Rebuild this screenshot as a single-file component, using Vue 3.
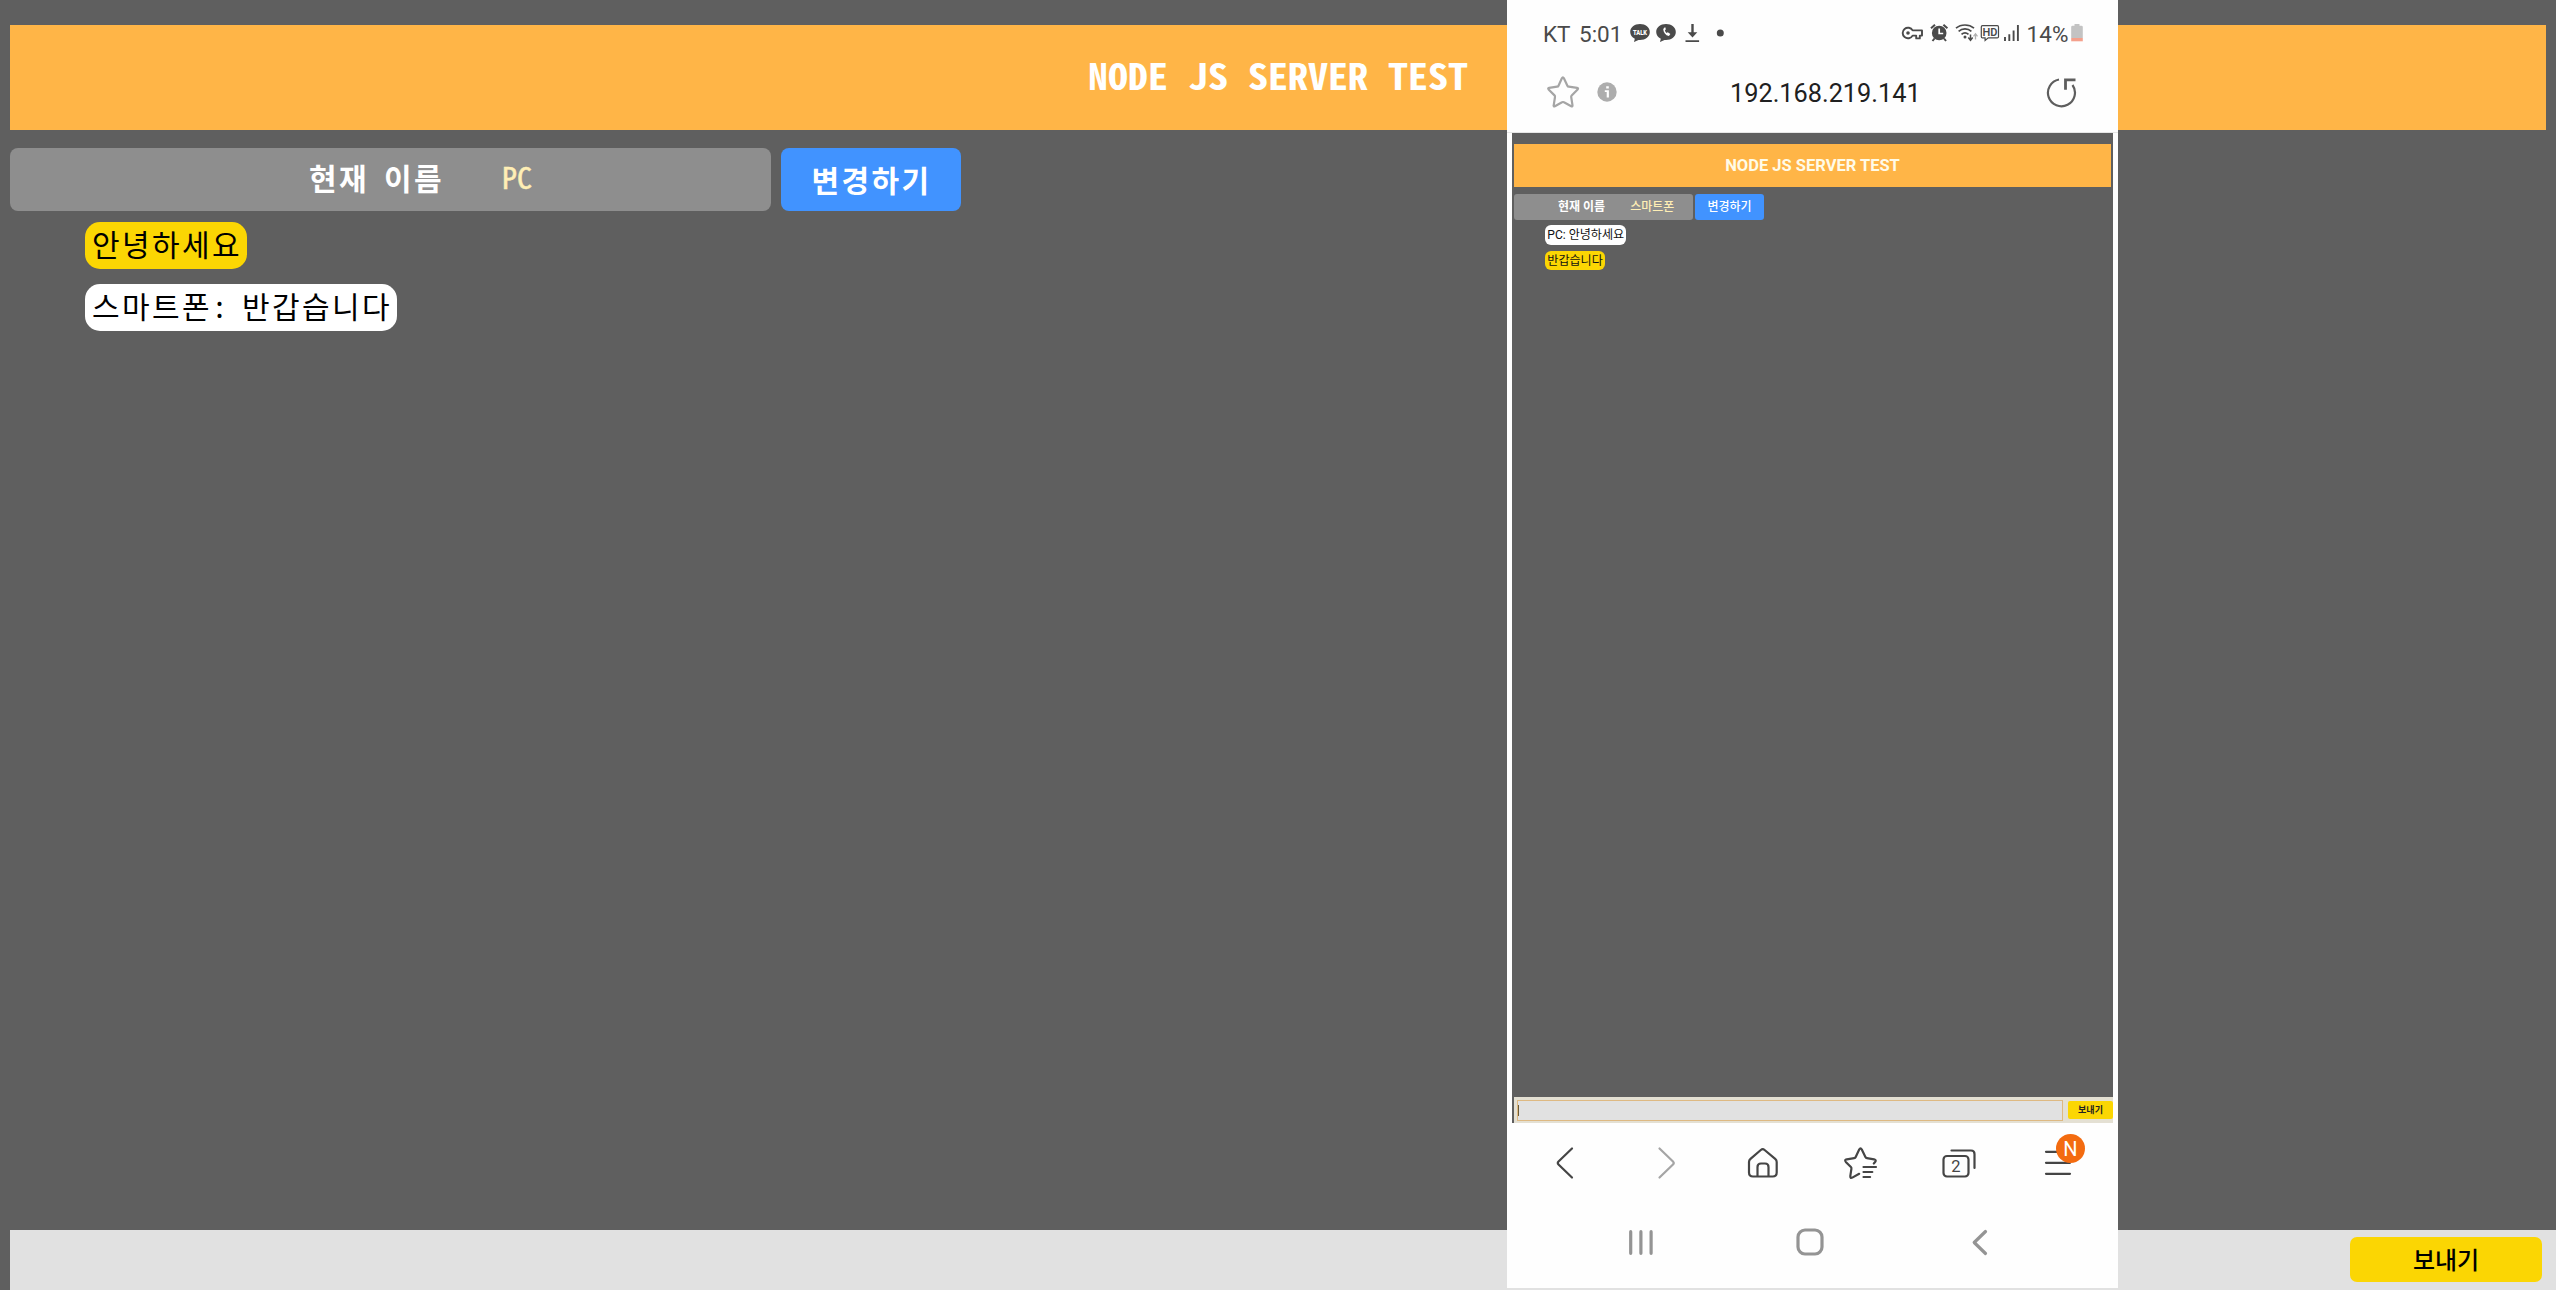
<script setup>
const desktopMessages = [
  { text: '안녕하세요', mine: true },
  { text: '스마트폰: 반갑습니다', mine: false },
]
const mobileMessages = [
  { text: 'PC: 안녕하세요', mine: false },
  { text: '반갑습니다', mine: true },
]
</script>

<template>
  <div class="page">
    <h1 class="title"><span>NODE JS SERVER TEST</span></h1>
    <div class="name-row">
      <div class="name-box"><b>현재 이름</b><span class="nick">PC</span></div>
      <button class="change">변경하기</button>
    </div>
    <ul class="messages">
      <li v-for="m in desktopMessages" :key="m.text" :class="{ mine: m.mine }">{{ m.text }}</li>
    </ul>
    <div class="composer"><button class="send">보내기</button></div>

    <section class="phone">
      <div class="status">
        <span class="carrier">KT</span><span class="clock">5:01</span>
        <svg class="notif" width="98" height="26" viewBox="128 20 98 26">
          <g fill="#4a4a4a">
            <path d="M140 24c5.6 0 9.8 3.5 9.8 8s-4.200 8-9.800 8h-1.500l-4.500 2 .8-3.200c-2.800-1.500-4.600-3.900-4.600-6.800 0-4.500 4.200-8 9.800-8z" />
            <path d="M166 24c5.600 0 9.800 3.500 9.800 8s-4.200 8-9.800 8h-1.500l-4.500 2 .8-3.200c-2.800-1.500-4.600-3.900-4.600-6.800 0-4.500 4.200-8 9.800-8z" />
            <circle cx="220.300" cy="33" r="3.500" />
            <path d="M191.300 24h2.400v8.200h3.600l-4.800 5.300-4.800-5.300h3.600zM185.500 40.200h13.600v1.700h-13.600z" />
          </g>
          <path d="M163.200 29c.3 3.700 2.200 6.300 5.700 7l1.500-2-2.600-1.800-1.300.8c-.9-.7-1.400-1.600-1.600-2.800l1-.9-.8-2.300z" fill="#fff" />
          <text x="140" y="34.600" font-size="6.300" font-weight="900" text-anchor="middle" fill="#fff" textLength="14" lengthAdjust="spacingAndGlyphs">TALK</text>
        </svg>
        <svg class="system" width="122" height="26" viewBox="100 20 122 26" fill="none" stroke="#4a4a4a">
          <path d="M112.600 30.400a5.300 5.300 0 1 0 0 5.200h3.600v2.800h3.600v-2.800h2.200v-5.200z" stroke-width="1.900" stroke-linejoin="round" />
          <circle cx="108" cy="33" r="1.800" fill="#4a4a4a" stroke="none" />
          <circle cx="139.200" cy="33" r="7.300" fill="#4a4a4a" stroke="none" />
          <path d="M131 28.300l4-3.600M147.400 28.300l-4-3.600M134.500 38.500l-2 2.500M144 38.500l2 2.500" stroke-width="2" />
          <path d="M139.200 28.500V33.500h4" stroke="#fff" stroke-width="1.700" />
          <path d="M156 28.200c5-4.300 13-4.300 18 0M158.600 31.300c3.700-3.200 9.100-3.200 12.800 0M161.500 34.300c2-1.700 5-1.700 7 0" stroke-width="1.700" />
          <circle cx="165" cy="37" r="1.500" fill="#4a4a4a" stroke="none" />
          <path d="M170.500 34.500v5M168.300 37.500l2.200 2.700 2.200-2.700" stroke-width="1.500" />
          <path d="M175.500 39.500V34M173.500 36.300l2-2.600 2 2.600" stroke="#b0b0b0" stroke-width="1.300" />
          <path d="M182.500 25.700h14.800q1.200 0 1.200 1.200v9.800q0 1.200-1.200 1.200h-9l-3.200 2.600v-2.600h-2.600q-1.200 0-1.200-1.200v-9.800q0-1.200 1.200-1.200z" stroke-width="1.200" />
          <text x="189.900" y="35.700" font-size="11" font-weight="600" text-anchor="middle" fill="#4a4a4a" stroke="none">HD</text>
          <path d="M205 37v4M209.300 34.300V41M213.600 30.500V41M217.900 25V41" stroke-width="1.900" />
        </svg>
        <span class="percent">14%</span>
        <svg class="battery" width="12" height="18" viewBox="0 0 12 18">
          <path d="M3.500 0h5v1.800h2q1.300 0 1.300 1.300V14H.2V3.100q0-1.300 1.300-1.300h2z" fill="#c3c3c3" />
          <path d="M.2 14h11.600v3.300H.2z" fill="#f4a08c" />
        </svg>
      </div>
      <div class="address">
        <svg class="fav" width="34" height="34" viewBox="0 0 34 34" fill="none" stroke="#a5a5a5" stroke-width="2.200" stroke-linejoin="round">
          <path d="M15.900 3.200q1-1.900 2 0l3.500 7.500q.4.900 1.400 1l8.300 1.200q1.600.3.500 1.500l-5.900 6q-.7.700-.5 1.600l1.300 8.300q.1 1.600-1.300.9l-7.200-3.900q-1-.6-2 0l-7.100 3.900q-1.500.6-1.200-.9L9 22q.2-.9-.5-1.600l-5.900-6q-1-1.200.5-1.500l8-1.200q1-.1 1.400-1z" />
        </svg>
        <svg class="info" width="20" height="20" viewBox="0 0 20 20">
          <circle cx="10" cy="10" r="9.700" fill="#adadad" />
          <path d="M9.200 4.200h2.600v2.400H9.200zM7.800 8.200h4.100v7.300H9.700V10H7.800z" fill="#fff" />
        </svg>
        <span class="url">192.168.219.141</span>
        <svg class="reload" width="32" height="32" viewBox="0 0 32 32" fill="none" stroke="#5e5e5e" stroke-width="2.200">
          <path d="M14 2.500A13.500 13.500 0 1 0 27.500 8" />
          <path d="M30.500 2.900H20.500V12.800" stroke-width="2.800" />
        </svg>
      </div>

      <div class="screen">
        <h2 class="m-title">NODE JS SERVER TEST</h2>
        <div class="m-name-row">
          <div class="m-name-box"><b>현재 이름</b><span class="nick">스마트폰</span></div>
          <button class="m-change">변경하기</button>
        </div>
        <ul class="m-messages">
          <li v-for="m in mobileMessages" :key="m.text" :class="{ mine: m.mine }">{{ m.text }}</li>
        </ul>
        <div class="m-composer">
          <div class="m-input"><i></i></div>
          <button class="m-send">보내기</button>
        </div>
      </div>

      <div class="toolbar">
        <svg width="36" height="36" viewBox="0 0 36 36"><path d="M25 3.500L11.500 16.500q-1.500 1.500 0 3L25 32.500" /></svg>
        <svg class="off" width="36" height="36" viewBox="0 0 36 36"><path d="M13.500 3.500L27 16.500q1.500 1.500 0 3L13.500 32.500" /></svg>
        <svg width="36" height="36" viewBox="0 0 36 36">
          <path d="M16.800 5q1.900-1.600 3.800 0L31.200 13.800q1.500 1.300 1.500 3.200V27.500q0 4-4 4H9q-4 0-4-4V17q0-1.900 1.500-3.200zM13.500 31.500V22q0-3.500 3.500-3.500h4q3.500 0 3.500 3.500v9.500" />
        </svg>
        <svg width="36" height="36" viewBox="0 0 36 36">
          <path d="M30.800 18.500l1.300-1.400q1.700-2.200-1-2.800l-7.200-1.200q-1-.1-1.500-1.100L18.800 4.500q-1.300-2.400-2.600 0L12.700 12q-.4 1-1.500 1.100L3.800 14.300q-2.700.6-1 2.600l5.100 5.200q.7.700.5 1.700L7.300 31.200q-.2 2.400 2 1.400l6.900-3.800M20.500 22H33M20.500 27h8.800M20.500 32h6.600" />
        </svg>
        <svg width="36" height="36" viewBox="0 0 36 36">
          <rect x="2.500" y="11" width="25" height="20.500" rx="3.500" />
          <path d="M10.500 5.500H30q3.500 0 3.500 3.500v14" />
          <text x="15" y="27" font-size="16.500" text-anchor="middle">2</text>
        </svg>
        <div class="menu">
          <svg width="36" height="36" viewBox="0 0 36 36"><path d="M6 6.800h24M6 17.800h24M6 28.800h24" /></svg>
          <span class="badge">N</span>
        </div>
      </div>
      <div class="navbar">
        <svg width="30" height="30" viewBox="0 0 30 30"><path d="M4.700 4.700v21.600M14.900 4.700v21.600M25.100 4.700v21.600" /></svg>
        <svg width="30" height="30" viewBox="0 0 30 30"><rect x="3" y="3" width="24" height="24" rx="7" /></svg>
        <svg width="30" height="30" viewBox="0 0 30 30"><path d="M21.500 4.500L10.200 15.500 21.500 26.500" /></svg>
      </div>
    </section>
  </div>
</template>

<style>
body { margin: 0; background: #5f5f5f; }
</style>

<style scoped>
.page {
  position: relative;
  box-sizing: border-box;
  width: 2556px;
  height: 1290px;
  padding: 25px 0 0 10px;
  overflow: hidden;
  display: flex;
  flex-direction: column;
  background: #5f5f5f;
  font-family: "Noto Sans Mono CJK KR", "Noto Sans CJK KR", monospace;
}
button { border: 0; padding: 0; margin: 0; font-family: inherit; }
ul { list-style: none; margin: 0; padding: 0; }
.title {
  box-sizing: border-box;
  height: 105px;
  margin: 0 10px 0 0;
  background: #ffb547;
  color: #fff;
  font-size: 40px;
  line-height: 98px;
  text-align: center;
}
.title span { display: inline-block; transform: scaleY(.92); }
.name-row { display: flex; gap: 10px; margin-top: 18px; height: 63px; }
.name-box {
  box-sizing: border-box;
  width: 761px;
  padding-left: 299px;
  border-radius: 8px;
  background: #8e8e8e;
  color: #fff;
  display: flex;
  font-size: 30px;
  line-height: 59px;
  white-space: pre;
}
.name-box b, .change, .messages li { letter-spacing: 2.400px; word-spacing: -2.400px; }
.messages li { word-spacing: -4.800px; }
.nick { color: #ffefb5; }
.name-box .nick { margin-left: 58px; font-size: 30px; line-height: 57px; -webkit-text-stroke: .5px #ffefb5; }
.change {
  width: 180px;
  padding: 0 0 2px 1px;
  border-radius: 8px;
  background: #4193ff;
  color: #fff;
  font-size: 30px;
  line-height: 60px;
  font-weight: 700;
}
.messages { display: flex; flex-direction: column; align-items: flex-start; gap: 15px; margin: 11px 0 0 75px; }
.messages li {
  height: 47px;
  padding: 0 5px 0 7px;
  border-radius: 15px;
  background: #fff;
  color: #000;
  font-size: 30px;
  line-height: 43px;
}
.messages .mine, .m-messages .mine { background: #fbd603; }
.composer {
  display: flex;
  justify-content: flex-end;
  margin-top: auto;
  height: 60px;
  background: #e1e1e1;
}
.send {
  width: 192px;
  height: 45px;
  margin: 7px 14px 0 0;
  padding-bottom: 1px;
  border-radius: 7px;
  background: #fbd603;
  color: #000;
  font: 500 24px/42px "Noto Sans CJK KR", sans-serif;
}

.phone {
  position: absolute;
  left: 1507px;
  top: 0;
  width: 611px;
  height: 1288px;
  display: flex;
  flex-direction: column;
  background: #fefefe;
  font-family: Roboto, "Noto Sans CJK KR", sans-serif;
}
.status {
  display: flex;
  height: 50px;
  padding: 20px 0 0 36px;
  box-sizing: border-box;
  color: #4a4a4a;
  font-size: 22.500px;
  line-height: 28px;
}
.status svg { flex: none; }
.carrier { width: 36px; }
.clock { width: 42px; }
.notif { margin-left: 7px; }
.system { margin-left: auto; }
.percent { width: 43px; margin-left: 4px; text-align: center; }
.battery { margin: 4px 35px 0 2px; }
.address { display: flex; height: 83px; box-sizing: border-box; padding: 25px 0 0 39px; border-bottom: 1px solid #e6e6e6; }
.info { margin: 7px 0 0 17px; }
.url { margin-left: 113px; width: 190px; color: #202020; font-size: 25.300px; line-height: 37px; }
.reload { margin: 2px 0 0 125px; }

.screen {
  display: flex;
  flex-direction: column;
  box-sizing: border-box;
  width: 601px;
  height: 990px;
  margin-left: 5px;
  padding: 11px 0 0 2px;
  background: #5f5f5f;
}
.m-title {
  margin: 0 2px 0 0;
  height: 43px;
  background: #ffb547;
  color: #fffbe8;
  font-size: 16.500px;
  line-height: 43px;
  text-align: center;
}
.m-name-row { display: flex; gap: 2px; margin-top: 7px; height: 26px; font-size: 12px; line-height: 26px; }
.m-name-box { box-sizing: border-box; width: 179px; padding-left: 44px; display: flex; border-radius: 3px; background: #8e8e8e; color: #fff; }
.m-name-box .nick { margin-left: 25px; font-weight: 500; }
.m-change { width: 69px; border-radius: 3px; background: #4193ff; color: #fff; font-size: 12px; line-height: 26px; font-weight: 500; }
.m-messages { display: flex; flex-direction: column; align-items: flex-start; gap: 6px; margin: 5px 0 0 31px; }
.m-messages li { height: 19.500px; padding: 0 2.300px; border-radius: 6px; background: #fff; color: #111; font-size: 12.050px; line-height: 20px; }
.m-composer { display: flex; box-sizing: border-box; margin-top: auto; height: 26px; padding: 3px 0 0 3px; background: #e4e0d3; }
.m-input { box-sizing: border-box; width: 546px; height: 21px; padding: 4px 0 0; border: 1px solid #deb982; background: #e1e1e1; }
.m-input i { display: block; width: 1px; height: 11px; background: #6b5a35; }
.m-send { width: 45px; height: 18px; margin: 1px 0 0 5px; border-radius: 2px; background: #fbd603; color: #222; font-size: 9px; line-height: 18px; font-weight: 700; }

.toolbar { display: flex; justify-content: space-between; padding: 22px 42px 0 40px; }
.toolbar svg { display: block; fill: none; stroke: #454545; stroke-width: 2.200; stroke-linecap: round; stroke-linejoin: round; }
.toolbar text { fill: #454545; stroke: none; }
.toolbar .off { stroke: #a5a5a5; }
.menu { position: relative; }
.badge {
  position: absolute;
  left: 16px;
  top: -11px;
  width: 29px;
  height: 29px;
  border-radius: 50%;
  background: #f36b10;
  color: #fff;
  font-size: 20px;
  line-height: 30px;
  text-align: center;
}
.navbar { display: flex; justify-content: space-between; padding: 46px 124px 0 119px; }
.navbar svg { fill: none; stroke: #949494; stroke-width: 3.200; stroke-linecap: round; stroke-linejoin: round; }
</style>
